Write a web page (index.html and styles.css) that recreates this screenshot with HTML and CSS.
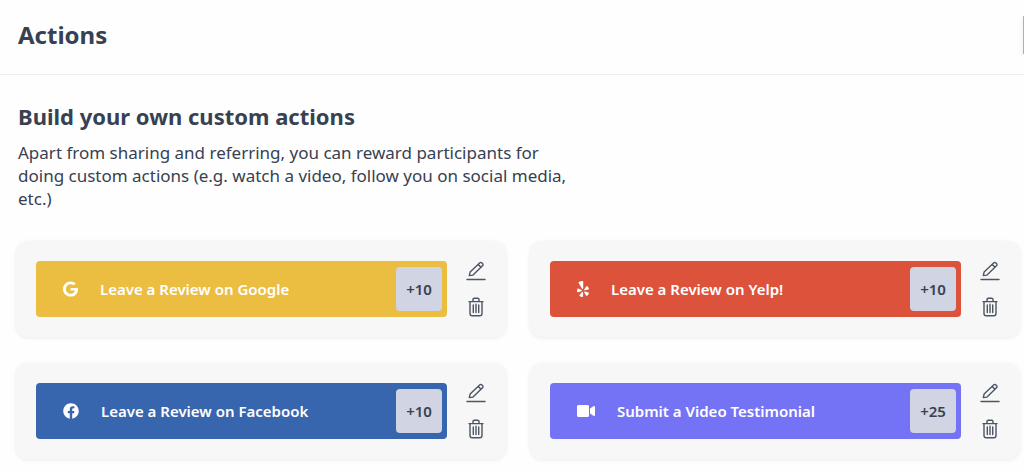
FILE: index.html
```html
<!DOCTYPE html>
<html lang="en">
<head>
<meta charset="utf-8">
<title>Actions</title>
<link rel="stylesheet" href="styles.css">
</head>
<body>
<svg class="sprite" aria-hidden="true">
  <symbol id="pencil" viewBox="0 0 20 20">
    <path d="M1 18.5h18M3.3 14.6l.8-3.5L13.6 1.9a1.6 1.6 0 0 1 2.3 0l.6.6a1.6 1.6 0 0 1 0 2.3L7 14.1zM12.2 3.4l2.8 2.8"/>
  </symbol>
  <symbol id="trash" viewBox="0 0 20 20">
    <path d="M3 4.6h14M7 4.4V2.6Q7 1.2 8.4 1.2h3.2q1.4 0 1.4 1.4v1.8M4 5v11.6q0 2.2 2.2 2.2h7.6q2.2 0 2.2-2.2V5M7.3 8v7.5M10 7.2v8.4M12.7 8v7.5"/>
  </symbol>
</svg>

<header class="topbar">
  <h1 class="page-title">Actions</h1>
  <button class="topbar-button" type="button"></button>
</header>

<main class="content">
  <section class="intro">
    <h2 class="section-title">Build your own custom actions</h2>
    <p class="lead">Apart from sharing and referring, you can reward participants for doing custom actions (e.g. watch a video, follow you on social media, etc.)</p>
  </section>

  <div class="cards">
    <article class="card">
      <button class="action google" type="button">
        <svg class="brand" width="15" height="16" viewBox="0 0 488 512"><path d="M488 261.8C488 403.3 391.1 504 248 504 110.8 504 0 393.2 0 256S110.8 8 248 8c66.8 0 123 24.5 166.3 64.9l-67.5 64.9C258.5 52.6 94.3 116.6 94.3 256c0 86.5 69.1 156.6 153.7 156.6 98.2 0 135-70.4 140.8-106.9H248v-85.3h236.1c2.3 12.7 3.9 24.9 3.9 41.4z"/></svg>
        <span class="action-label">Leave a Review on Google</span>
        <span class="points">+10</span>
      </button>
      <div class="tools">
        <button class="tool" type="button" aria-label="Edit"><svg class="tool-icon"><use href="#pencil"/></svg></button>
        <button class="tool" type="button" aria-label="Delete"><svg class="tool-icon"><use href="#trash"/></svg></button>
      </div>
    </article>

    <article class="card">
      <button class="action yelp" type="button">
        <svg class="brand" width="12" height="16" viewBox="0 0 384 512"><path d="M42.9 240.32l99.62 48.61c19.2 9.4 16.2 37.51-4.5 42.71L30.5 358.45a22.79 22.79 0 0 1-28.21-19.6 197.16 197.16 0 0 1 9-85.32 22.8 22.8 0 0 1 31.61-13.21zm44 239.25a199.45 199.45 0 0 0 79.42 32.11A22.78 22.78 0 0 0 192.94 490l3.9-110.82c.7-21.3-25.5-31.91-39.81-16.1l-74.21 82.4a22.82 22.82 0 0 0 4.09 34.09zm145.34-109.92l58.81 94a22.93 22.93 0 0 0 34 5.5 198.36 198.36 0 0 0 52.71-67.61A23 23 0 0 0 364.17 370l-105.42-34.26c-20.31-6.5-37.81 15.8-26.51 33.91zm148.33-132.23a197.44 197.44 0 0 0-50.41-69.31 22.85 22.85 0 0 0-34 4.4l-62 91.92c-11.9 17.7 4.7 40.61 25.2 34.71L366 268.63a23 23 0 0 0 14.61-31.21zM62.11 30.18a22.86 22.86 0 0 0-9.9 32l104.12 180.44c11.7 20.2 42.61 11.9 42.61-11.4V22.88a22.67 22.67 0 0 0-24.5-22.8 320.37 320.37 0 0 0-112.33 30.1z"/></svg>
        <span class="action-label">Leave a Review on Yelp!</span>
        <span class="points">+10</span>
      </button>
      <div class="tools">
        <button class="tool" type="button" aria-label="Edit"><svg class="tool-icon"><use href="#pencil"/></svg></button>
        <button class="tool" type="button" aria-label="Delete"><svg class="tool-icon"><use href="#trash"/></svg></button>
      </div>
    </article>

    <article class="card">
      <button class="action facebook" type="button">
        <svg class="brand" width="16" height="16" viewBox="0 0 512 512"><path d="M504 256C504 119 393 8 256 8S8 119 8 256c0 123.78 90.69 226.38 209.25 245V327.69h-63V256h63v-54.64c0-62.15 37-96.48 93.67-96.48 27.14 0 55.52 4.84 55.52 4.84v61h-31.28c-30.8 0-40.41 19.12-40.41 38.73V256h68.78l-11 71.69h-57.78V501C413.31 482.38 504 379.78 504 256z"/></svg>
        <span class="action-label">Leave a Review on Facebook</span>
        <span class="points">+10</span>
      </button>
      <div class="tools">
        <button class="tool" type="button" aria-label="Edit"><svg class="tool-icon"><use href="#pencil"/></svg></button>
        <button class="tool" type="button" aria-label="Delete"><svg class="tool-icon"><use href="#trash"/></svg></button>
      </div>
    </article>

    <article class="card">
      <button class="action video" type="button">
        <svg class="brand" width="18" height="16" viewBox="0 0 576 512"><path d="M336.2 64H47.8C21.4 64 0 85.4 0 111.8v288.4C0 426.6 21.4 448 47.8 448h288.4c26.4 0 47.8-21.4 47.8-47.8V111.8c0-26.4-21.4-47.8-47.8-47.8zm189.4 37.7L416 177.3v157.4l109.6 75.5c21.2 14.6 50.4-.3 50.4-25.8V127.5c0-25.4-29.1-40.4-50.4-25.8z"/></svg>
        <span class="action-label">Submit a Video Testimonial</span>
        <span class="points">+25</span>
      </button>
      <div class="tools">
        <button class="tool" type="button" aria-label="Edit"><svg class="tool-icon"><use href="#pencil"/></svg></button>
        <button class="tool" type="button" aria-label="Delete"><svg class="tool-icon"><use href="#trash"/></svg></button>
      </div>
    </article>
  </div>
</main>
</body>
</html>
```
FILE: styles.css
```css
* {
  box-sizing: border-box;
}

body {
  margin: 0;
  background: #fefefe;
  color: #374151;
  font-family: "Noto Sans", "Open Sans", sans-serif;
}

button {
  border: 0;
  padding: 0;
  background: none;
  color: inherit;
  font: inherit;
  cursor: pointer;
}

.sprite {
  display: none;
}

.topbar {
  display: flex;
  align-items: center;
  justify-content: space-between;
  padding: 16px 0 20px 18px;
  border-bottom: 1px solid #ededee;
  overflow: hidden;
}

.page-title {
  margin: 0;
  font-size: 24px;
  line-height: 38px;
  font-weight: 700;
}

.topbar-button {
  width: 1px;
  height: 38px;
  background: #8fbfb9;
  box-shadow: 0 2px 4px rgba(0, 0, 0, 0.2);
}

.content {
  padding: 25px 4px 12px 16px;
}

.intro {
  max-width: 572px;
  padding-left: 2px;
}

.section-title {
  margin: 0;
  font-size: 22px;
  line-height: 32px;
  font-weight: 700;
}

.lead {
  margin: 9px 0 0;
  font-size: 17px;
  line-height: 23px;
}

.cards {
  display: grid;
  grid-template-columns: 1fr 1fr;
  gap: 26px 24px;
  margin-top: 31px;
}

.card {
  display: flex;
  align-items: center;
  gap: 19px;
  padding: 20px;
  border-radius: 12px;
  background: #f7f7f7;
  box-shadow: 0 1px 4px rgba(0, 0, 0, 0.08);
}

.action {
  flex: 1;
  display: flex;
  align-items: center;
  gap: 22px;
  padding: 6px 5px 6px 27px;
  border-radius: 4px;
  color: #fff;
  text-align: left;
}

.google {
  background: #ebbe42;
}

.yelp {
  background: #dc523b;
}

.facebook {
  background: #3866ae;
}

.video {
  background: #7473f6;
}

.brand {
  flex: none;
  fill: currentColor;
}

.action-label {
  flex: 1;
  font-size: 15px;
  line-height: 20px;
  font-weight: 600;
}

.points {
  width: 46px;
  border-radius: 4px;
  background: #d0d4e3;
  color: #374151;
  font-size: 15px;
  line-height: 44px;
  font-weight: 600;
  text-align: center;
}

.tools {
  display: grid;
  gap: 16px;
}

.tool,
.tool-icon {
  display: block;
  width: 20px;
  height: 20px;
}

.tool-icon {
  fill: none;
  stroke: #4b5563;
  stroke-width: 1.4;
  stroke-linecap: round;
  stroke-linejoin: round;
}
```
